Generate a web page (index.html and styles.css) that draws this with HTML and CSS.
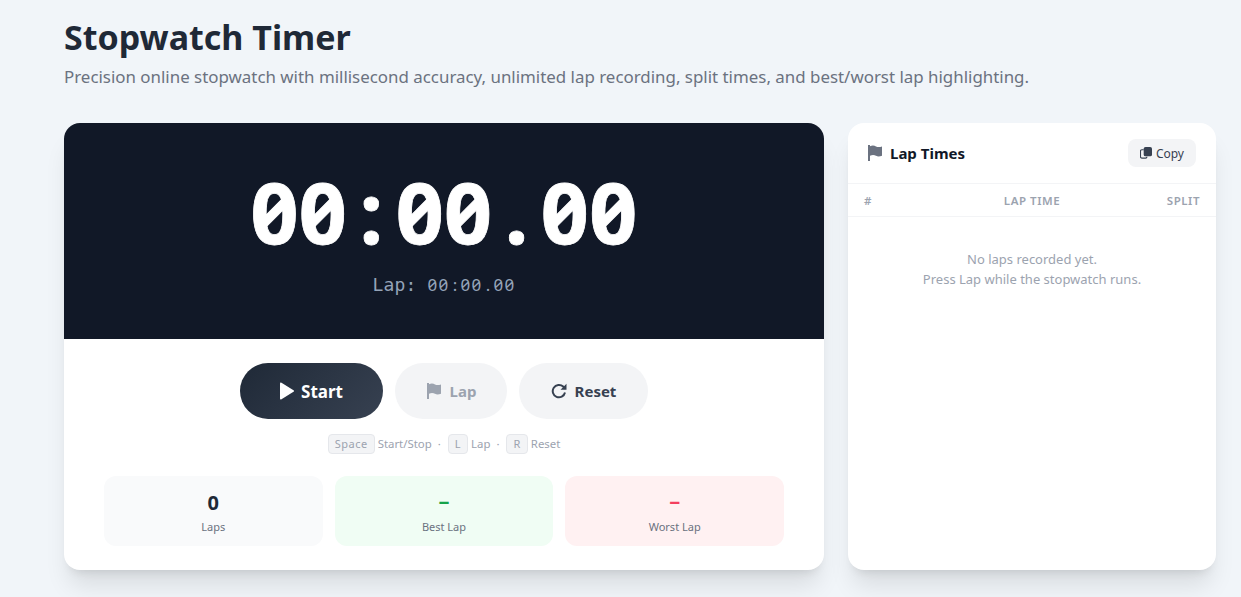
FILE: index.html
```html
<!DOCTYPE html>
<html lang="en">
<head>
<meta charset="utf-8">
<title>Stopwatch Timer</title>
<link rel="stylesheet" href="styles.css">
</head>
<body>
<main class="page">
  <header class="head">
    <h1>Stopwatch Timer</h1>
    <p>Precision online stopwatch with millisecond accuracy, unlimited lap recording, split times, and best/worst lap highlighting.</p>
  </header>
  <div class="layout">
    <section class="card watch">
      <div class="display">
        <div class="time">00<span class="p">:</span>00<span class="p">.</span>00</div>
        <div class="lap-time">Lap: <span class="lap-digits">00<span class="p">:</span>00<span class="p">.</span>00</span></div>
      </div>
      <div class="body">
        <div class="buttons">
          <button class="btn start"><svg class="ic" viewBox="0 0 14 18" width="14" height="18"><path d="M0 1.500v15a1 1 0 0 0 1.500.8l12-7.500a1 1 0 0 0 0-1.600L1.500.7A1 1 0 0 0 0 1.500z" fill="currentColor"/></svg>Start</button>
          <button class="btn lap"><svg class="ic" viewBox="0 0 16 16" width="16" height="16"><path d="M1 0h2v1.200c2.500-1 4.500-.6 6 .2 1.500.7 3.500.9 6 0v9.300c-2.500 1-4.500.9-6 .1-1.500-.8-3.500-1.100-6-.1V16H1z" fill="currentColor"/></svg>Lap</button>
          <button class="btn reset"><svg class="ic" viewBox="0 0 16 16" width="16" height="16"><path d="M14 9.500A6.200 6.200 0 1 1 12.200 3.600L14 5.500" fill="none" stroke="currentColor" stroke-width="2"/><path d="M15.500.8v6h-6z" fill="currentColor"/></svg>Reset</button>
        </div>
        <div class="keys">
          <kbd>Space</kbd><span>Start/Stop</span><i>·</i><kbd>L</kbd><span>Lap</span><i>·</i><kbd>R</kbd><span>Reset</span>
        </div>
        <div class="stats">
          <div class="stat"><b>0</b><span>Laps</span></div>
          <div class="stat best"><b>–</b><span>Best Lap</span></div>
          <div class="stat worst"><b>–</b><span>Worst Lap</span></div>
        </div>
      </div>
    </section>
    <aside class="card side">
      <div class="side-head">
        <h2><svg viewBox="0 0 16 16" width="16" height="16"><path d="M1 0h2v1.200c2.500-1 4.500-.6 6 .2 1.500.7 3.500.9 6 0v9.300c-2.500 1-4.500.9-6 .1-1.500-.8-3.500-1.100-6-.1V16H1z" fill="currentColor"/></svg>Lap Times</h2>
        <button class="copy"><svg viewBox="0 0 13 13" width="12" height="12"><rect x="4" y="0" width="9" height="10" rx="2" fill="currentColor"/><path d="M4 3H2a1.500 1.500 0 0 0-1.500 1.500v6A1.500 1.500 0 0 0 2 12h4a1.500 1.500 0 0 0 1.500-1.500" fill="none" stroke="currentColor" stroke-width="1.300"/></svg>Copy</button>
      </div>
      <div class="cols"><span>#</span><span>Lap Time</span><span>Split</span></div>
      <p class="empty">No laps recorded yet.<br>Press Lap while the stopwatch runs.</p>
    </aside>
  </div>
</main>
</body>
</html>
```
FILE: styles.css
```css
* { box-sizing: border-box; }
html, body { margin: 0; height: 100%; }
body {
  background: #f1f5f9;
  color: #1f2937;
  font-family: "Noto Sans", sans-serif;
  overflow: hidden;
}
.page { padding: 12px 25px 0 64px; }
.head h1 { margin: 0; font-size: 34px; line-height: 50px; font-weight: 700; color: #1f2937; }
.head p { margin: 3px 0 0; font-size: 16.9px; line-height: 24px; color: #6b7280; }
.layout { display: grid; grid-template-columns: 760px 368px; gap: 24px; margin-top: 34px; }
.card {
  background: #fff;
  border-radius: 16px;
  overflow: hidden;
  box-shadow: 0 20px 25px -5px rgba(0, 0, 0, .1), 0 8px 10px -6px rgba(0, 0, 0, .1);
  height: 447px;
}
.display {
  background: #111827;
  height: 216px;
  padding-top: 39px;
  text-align: center;
}
.time {
  font-family: "Noto Sans", sans-serif;
  font-feature-settings: "zero" 1, "tnum" 1;
  font-weight: 700;
  font-size: 84px;
  line-height: 100px;
  letter-spacing: .3px;
  color: #fff;
  -webkit-text-stroke: .8px #fff;
}
.time .p { display: inline-block; width: 48.5px; text-align: center; letter-spacing: 0; }
.lap-time {
  font-family: "DejaVu Sans Mono", monospace;
  font-size: 18px;
  line-height: 24px;
  margin-top: 11px;
  letter-spacing: .16px;
  color: #94a3b8;
}
.lap-digits {
  font-family: "Noto Sans", sans-serif;
  font-feature-settings: "zero" 1, "tnum" 1;
  font-size: 17px;
  letter-spacing: 1.28px;
}
.lap-digits .p { display: inline-block; width: 11px; text-align: center; letter-spacing: 0; }
.body { padding: 24px 40px; }
.buttons { display: flex; justify-content: center; gap: 12px; }
.btn {
  display: flex;
  align-items: center;
  justify-content: center;
  gap: 8px;
  height: 56px;
  border: 0;
  border-radius: 28px;
  font-family: inherit;
  font-size: 15px;
  font-weight: 700;
  background: #f3f4f6;
  color: #374151;
}
.start { width: 143px; gap: 7px; font-size: 17px; background: linear-gradient(135deg, #1f2937, #374151); color: #fff; }
.lap { width: 112px; color: #9ca3af; }
.reset { width: 129px; }
.keys {
  display: flex;
  justify-content: center;
  align-items: center;
  margin-top: 15px;
  font-size: 11.4px;
  line-height: 20px;
  color: #9ca3af;
}
.keys kbd {
  font-family: inherit;
  font-size: 11px;
  line-height: 18px;
  letter-spacing: .5px;
  padding: 0 6px;
  margin-right: 3px;
  background: #f3f4f6;
  border: 1px solid #e5e7eb;
  border-radius: 4px;
}
.keys i { font-style: normal; margin: 0 7px 0 6px; }
.stats { display: grid; grid-template-columns: repeat(3, 1fr); gap: 12px; margin-top: 22px; }
.stat {
  height: 70px;
  padding-top: 13px;
  background: #f9fafb;
  border-radius: 12px;
  text-align: center;
}
.stat b { display: block; font-size: 20px; line-height: 27px; color: #1f2937; }
.stat span { display: block; font-size: 11px; line-height: 16px; margin-top: 3px; color: #6b7280; }
.best { background: #f0fdf4; }
.best b { color: #16a34a; font-size: 22px; font-weight: 600; line-height: 23px; padding-bottom: 4px; }
.worst { background: #fff1f2; }
.worst b { color: #f43f5e; font-size: 22px; font-weight: 600; line-height: 23px; padding-bottom: 4px; }
.side-head {
  display: flex;
  justify-content: space-between;
  align-items: center;
  height: 61px;
  padding: 0 20px;
  border-bottom: 1px solid #f3f4f6;
}
.side-head h2 {
  display: flex;
  align-items: center;
  gap: 7px;
  margin: 0 0 0 -1px;
  font-size: 15px;
  font-weight: 700;
  color: #111827;
}
.side-head h2 svg { color: #6b7280; }
.copy {
  display: flex;
  align-items: center;
  gap: 4px;
  height: 28px;
  padding: 0 12px;
  border: 0;
  border-radius: 8px;
  background: #f3f4f6;
  color: #374151;
  font-family: inherit;
  font-size: 12px;
}
.cols {
  display: grid;
  grid-template-columns: 1fr 2fr 1fr;
  height: 33px;
  padding: 0 16px;
  align-items: center;
  border-bottom: 1px solid #f3f4f6;
  font-size: 11.5px;
  font-weight: 600;
  letter-spacing: .55px;
  text-transform: uppercase;
  color: #9ca3af;
}
.cols span:nth-child(2) { text-align: center; }
.cols span:nth-child(3) { text-align: right; }
.empty {
  margin: 32px 0 0;
  text-align: center;
  font-size: 13px;
  line-height: 20px;
  color: #9ca3af;
}
```
